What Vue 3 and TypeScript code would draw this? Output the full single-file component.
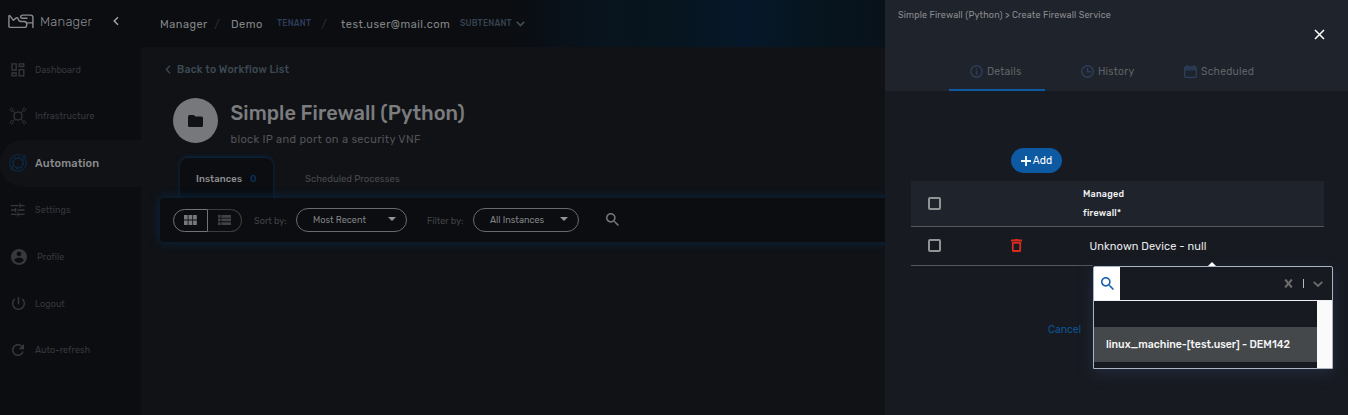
<script setup lang="ts">
import { ref } from 'vue'

interface NavItem {
  label: string
  icon: string
  active?: boolean
}

const nav: NavItem[] = [
  { label: 'Dashboard', icon: 'dashboard' },
  { label: 'Infrastructure', icon: 'infra' },
  { label: 'Automation', icon: 'automation', active: true },
  { label: 'Settings', icon: 'settings' },
  { label: 'Profile', icon: 'profile' },
  { label: 'Logout', icon: 'logout' },
  { label: 'Auto-refresh', icon: 'refresh' },
]

const allChecked = ref(false)
const rowChecked = ref(false)
</script>

<template>
  <div class="app">
    <aside class="sidebar">
      <div class="brand">
        <svg class="logo" width="28" height="16" viewBox="0 0 28 16" fill="none" stroke="#8a8b8d" stroke-width="1.4" stroke-linejoin="round" stroke-linecap="round">
          <path d="M16.6 13.4H2Q.9 13.4 .9 12.3V2.4Q.9 .9 2 1.9L5.4 6.3L8.3 3.9Q9.6 3.2 10 4.6Q10.6 7.4 13 7.5H16.4Q18.8 7.7 18.8 10.4Q18.8 13.4 16.6 13.4" />
          <path d="M19 4.3H14.4Q12.6 4.3 12.6 2.9Q12.8 1.1 15 1.1H22.6Q24.9 1.1 24.9 3.6V13.4M19.6 8.9H24.7" />
        </svg>
        <span class="brand-name">Manager</span>
        <svg class="collapse" width="8" height="10" viewBox="0 0 8 10" fill="none" stroke="#a0a1a3" stroke-width="1.5"><path d="M6 1.2L2.2 5L6 8.8" /></svg>
      </div>
      <nav>
        <div v-for="item in nav" :key="item.label" class="nav-item" :class="[item.icon, { active: item.active }]">
          <span class="nav-icon">
            <svg v-if="item.icon === 'dashboard'" width="14" height="14" viewBox="0 0 14 14" fill="none" stroke="currentColor" stroke-width="1.3">
              <path d="M1 .9H5.2V7H1zM8.2 .9H12.8V3.5H8.2zM8.2 6.6H12.8V12.8H8.2zM1 10H5.2V12.8H1z" />
            </svg>
            <svg v-else-if="item.icon === 'infra'" width="18" height="18" viewBox="0 0 18 18" fill="none" stroke="currentColor" stroke-width=".9">
              <circle cx="9" cy="9" r="4" /><circle cx="9" cy="9" r="4.8" stroke-dasharray="1.3 1.7" />
              <path d="M3.6 3.6L6 6M14.4 3.6L12 6M3.6 14.4L6 12M14.4 14.4L12 12" />
              <path d="M2.7 .8L4.6 2.7L2.7 4.6L.8 2.7zM15.3 .8L17.2 2.7L15.3 4.6L13.4 2.7zM2.7 13.4L4.6 15.3L2.7 17.2L.8 15.3zM15.3 13.4L17.2 15.3L15.3 17.2L13.4 15.3z" />
            </svg>
            <svg v-else-if="item.icon === 'automation'" width="18" height="18" viewBox="0 0 18 18" fill="none" stroke="currentColor" stroke-width=".9">
              <path d="M12.5 1.4A8.2 8.2 0 0 0 2 13M3.4 15A8.2 8.2 0 0 0 16.2 5" />
              <circle cx="9" cy="9" r="4.9" /><circle cx="9" cy="9" r="5.8" stroke-dasharray="1.9 2.6" />
              <circle cx="14.9" cy="3.1" r="1.5" /><circle cx="3.1" cy="14.6" r="1.3" />
            </svg>
            <svg v-else-if="item.icon === 'settings'" width="14" height="14" viewBox="0 0 14 14" fill="none" stroke="currentColor" stroke-width="1.3">
              <path d="M0 2.6H7.6M9 .6V4.6M9 2.6H13.6M0 7H4M4.6 5V9M6.6 7H13.6M0 11.4H5.6M7 9.4V13.4M7 11.4H13.6" />
            </svg>
            <svg v-else-if="item.icon === 'profile'" width="20" height="20" viewBox="2 2 20 20" fill="currentColor">
              <path d="M12 2C6.48 2 2 6.48 2 12s4.48 10 10 10 10-4.48 10-10S17.52 2 12 2zm0 3c1.66 0 3 1.34 3 3s-1.34 3-3 3-3-1.34-3-3 1.34-3 3-3zm0 14.2c-2.5 0-4.71-1.28-6-3.22.03-1.99 4-3.08 6-3.08 1.99 0 5.97 1.09 6 3.08-1.29 1.94-3.5 3.22-6 3.22z" />
            </svg>
            <svg v-else-if="item.icon === 'logout'" width="13" height="13" viewBox="3 3 18 18" fill="currentColor">
              <path d="M13 3h-2v10h2V3zm4.83 2.17l-1.42 1.42C17.99 7.86 19 9.81 19 12c0 3.87-3.13 7-7 7s-7-3.13-7-7c0-2.19 1.01-4.14 2.58-5.42L6.17 5.17C4.23 6.82 3 9.26 3 12c0 4.97 4.03 9 9 9s9-4.03 9-9c0-2.74-1.23-5.18-3.17-6.83z" />
            </svg>
            <svg v-else width="12" height="12" viewBox="4 4 16 16" fill="currentColor">
              <path d="M17.65 6.35C16.2 4.9 14.21 4 12 4c-4.42 0-7.99 3.58-7.99 8s3.57 8 7.99 8c3.73 0 6.84-2.55 7.73-6h-2.08c-.82 2.33-3.04 4-5.65 4-3.31 0-6-2.69-6-6s2.69-6 6-6c1.66 0 3.14.69 4.22 1.78L13 11h7V4l-2.35 2.35z" />
            </svg>
          </span>
          <span class="nav-label">{{ item.label }}</span>
        </div>
      </nav>
    </aside>

    <div class="main">
      <header class="topbar">
        <span class="crumb c1">Manager</span><span class="slash">/</span>
        <span class="crumb c2">Demo</span><span class="tag t1">TENANT</span><span class="slash s2">/</span>
        <span class="crumb c3">test.user@mail.com</span><span class="tag t2">SUBTENANT</span>
        <svg class="sub-arrow" width="9" height="6" viewBox="0 0 9 6" fill="none" stroke="#3d4f59" stroke-width="1.6"><path d="M.7 .8L4.5 4.6L8.3 .8" /></svg>
      </header>
      <section class="content">
        <a class="back">
          <svg width="6" height="9" viewBox="0 0 6 9" fill="none" stroke="currentColor" stroke-width="1.3"><path d="M5 .8L1.3 4.5L5 8.2" /></svg>
          <span>Back to Workflow List</span>
        </a>
        <div class="workflow">
          <div class="folder">
            <svg width="15" height="12" viewBox="0 0 15 12" fill="#101216"><path d="M1.5 0H5.8L7.3 1.5H13.5Q15 1.5 15 3V10.5Q15 12 13.5 12H1.5Q0 12 0 10.5V1.5Q0 0 1.5 0z" /></svg>
          </div>
          <div class="titles">
            <h1>Simple Firewall (Python)</h1>
            <p>block IP and port on a security VNF</p>
          </div>
        </div>
        <div class="tabs">
          <div class="tab current"><span>Instances</span><b>0</b></div>
          <div class="tab other">Scheduled Processes</div>
        </div>
        <div class="filters">
          <div class="toggle">
            <span class="half on"><svg width="13" height="10" viewBox="0 0 13 10" fill="#77787a"><path d="M0 0h3.7v4.6H0zM4.5 0h3.8v4.6H4.5zM9.1 0h3.7v4.6H9.1zM0 5.4h3.7V10H0zM4.5 5.4h3.8V10H4.5zM9.1 5.4h3.7V10H9.1z" /></svg></span>
            <span class="half"><svg width="13" height="10" viewBox="0 0 13 10" fill="#414244"><path d="M0 0h2.6v2.7H0zM3.3 0H13v2.7H3.3zM0 3.6h2.6v2.7H0zM3.3 3.6H13v2.7H3.3zM0 7.2h2.6V10H0zM3.3 7.2H13V10H3.3z" /></svg></span>
          </div>
          <span class="filter-label sort">Sort by:</span>
          <div class="select recent"><span>Most Recent</span><i></i></div>
          <span class="filter-label by">Filter by:</span>
          <div class="select all"><span>All Instances</span><i></i></div>
          <svg class="search" width="13" height="13" viewBox="3 3 17.5 17.5" fill="#77787a"><path d="M15.5 14h-.79l-.28-.27C15.41 12.59 16 11.11 16 9.5 16 5.91 13.09 3 9.5 3S3 5.91 3 9.5 5.91 16 9.5 16c1.61 0 3.09-.59 4.23-1.57l.27.28v.79l5 4.99L20.49 19l-4.99-5zm-6 0C7.01 14 5 11.99 5 9.5S7.01 5 9.5 5 14 7.01 14 9.5 11.99 14 9.5 14z" /></svg>
        </div>
      </section>
    </div>

    <aside class="drawer">
      <div class="drawer-head">
        <div class="path">Simple Firewall (Python) &gt; Create Firewall Service</div>
        <button class="close"><svg width="11" height="11" viewBox="0 0 11 11" stroke="#fff" stroke-width="1.5"><path d="M1 1L10 10M10 1L1 10" /></svg></button>
        <div class="drawer-tabs">
          <div class="dtab selected">
            <svg width="13" height="13" viewBox="0 0 13 13" fill="none" stroke="#2d3f5c" stroke-width="1.4"><circle cx="6.5" cy="6.5" r="5.7" /><path d="M6.5 5.6V9.8M6.5 3.2V4.6" /></svg>
            <span>Details</span>
          </div>
          <div class="dtab history">
            <svg width="13" height="13" viewBox="0 0 13 13" fill="none" stroke="#2d3f5c" stroke-width="1.4"><circle cx="6.5" cy="6.5" r="5.7" /><path d="M6.5 2.8V6.8H9.8" /></svg>
            <span>History</span>
          </div>
          <div class="dtab scheduled">
            <svg width="13" height="13" viewBox="0 0 13 13" fill="none" stroke="#2d3f5c" stroke-width="1.3"><rect x=".7" y="1.8" width="11.6" height="10.5" rx="1.2" /><path d="M.7 4.8H12.3M3 0V2M10 0V2M.7 3H12.3" /></svg>
            <span>Scheduled</span>
          </div>
        </div>
      </div>
      <div class="drawer-body">
        <button class="add"><svg width="10" height="10" viewBox="0 0 10 10" stroke="#fff" stroke-width="1.8"><path d="M5 0V10M0 5H10" /></svg><span>Add</span></button>
        <div class="table">
          <div class="tr head">
            <span class="box" :class="{ checked: allChecked }" @click="allChecked = !allChecked"></span>
            <div class="th">Managed<br />firewall*</div>
          </div>
          <div class="tr row">
            <span class="box" :class="{ checked: rowChecked }" @click="rowChecked = !rowChecked"></span>
            <svg class="trash" width="11" height="13" viewBox="0 0 11 13" fill="none" stroke="#d92b1c" stroke-width="1.8"><path d="M0 1.5H11M3.4 .9H7.6M1.8 3.8H9.2V11.4Q9.2 12 8.6 12H2.4Q1.8 12 1.8 11.4z" /></svg>
            <div class="device">
              Unknown Device - null
              <div class="popover">
                <i class="caret"></i>
                <div class="combo">
                  <span class="combo-icon"><svg width="13" height="13" viewBox="3 3 17.5 17.5" fill="#0f5ca8"><path d="M15.5 14h-.79l-.28-.27C15.41 12.59 16 11.11 16 9.5 16 5.91 13.09 3 9.5 3S3 5.91 3 9.5 5.91 16 9.5 16c1.61 0 3.09-.59 4.23-1.57l.27.28v.79l5 4.99L20.49 19l-4.99-5zm-6 0C7.01 14 5 11.99 5 9.5S7.01 5 9.5 5 14 7.01 14 9.5 11.99 14 9.5 14z" /></svg></span>
                  <svg class="clear" width="9" height="9" viewBox="0 0 9 9" stroke="#6c6d6c" stroke-width="2"><path d="M1.2 .5L7.8 8.5M7.8 .5L1.2 8.5" /></svg>
                  <i class="bar"></i>
                  <svg class="down" width="10" height="6" viewBox="0 0 10 6" fill="none" stroke="#6c6d6c" stroke-width="1.8"><path d="M.7 .8L5 5L9.3 .8" /></svg>
                </div>
                <div class="list">
                  <div class="options"><div class="option">linux_machine-[test.user] - DEM142</div></div>
                  <div class="track"></div>
                </div>
              </div>
            </div>
          </div>
        </div>
        <a class="cancel">Cancel</a>
      </div>
    </aside>
  </div>
</template>

<style>
html, body { margin: 0; background: #101216; overflow: hidden; }
</style>

<style scoped>
* { box-sizing: border-box; }
.app { display: flex; width: 1348px; height: 415px; overflow: hidden; background: #101216; font-family: Rubik, Roboto, "Liberation Sans", sans-serif; white-space: nowrap; }
svg { display: block; flex: none; }
button { border: 0; padding: 0; background: none; font: inherit; }

.sidebar { width: 141px; flex: none; background: #0b0d11; }
.brand { display: flex; align-items: center; height: 46.2px; padding: 0 0 4px 8px; }
.logo { margin-top: 1px; }
.brand-name { width: 54px; margin-left: 4px; font-size: 13px; font-weight: 300; letter-spacing: .2px; color: #8a8b8d; }
.collapse { margin-left: 18px; }
.nav-item { display: flex; align-items: center; height: 46.8px; padding-left: 8.5px; font-size: 9px; letter-spacing: .05px; color: #36383d; }
.nav-icon { display: flex; justify-content: center; width: 19px; margin-right: 7.5px; }
.profile .nav-icon { width: 21px; }
.profile .nav-icon svg { width: 16px; height: 16px; }
.nav-label { line-height: 12px; }
.active { background: #101216; border-radius: 23px 0 0 23px; font-size: 11px; font-weight: 500; letter-spacing: .15px; color: #8a8b8d; }
.active .nav-label { padding-top: 1px; }
.active .nav-icon { color: #0b3157; }

.main { width: 744px; flex: none; }
.topbar { display: flex; align-items: center; height: 47px; padding: 1px 0 0 19px; background: linear-gradient(90deg, #0b0d11 0, #0b0d11 370px, #08131d 450px, #06151f 540px, #051729 608px, #06151f 665px, #08121b 744px); }
.crumb { font-size: 11px; letter-spacing: .47px; color: #848587; }
.slash { width: 5px; font-size: 12px; color: #2a2c30; }
.c1 { width: 54px; }
.c2 { width: 46px; margin-left: 12px; }
.t1 { width: 44px; }
.s2 { margin-right: 15px; }
.c3 { width: 119px; }
.tag { font-size: 8.4px; font-weight: 500; letter-spacing: .2px; padding-bottom: 2px; color: #2c3c59; }
.t2 { width: 56px; color: #36424f; }
.content { padding-top: 15px; }
.back { display: flex; align-items: center; height: 14px; margin-left: 24px; color: #3d4952; font-size: 10.5px; font-weight: 500; letter-spacing: .22px; }
.back svg { margin-top: 1px; }
.back span { margin-left: 6px; }
.workflow { display: flex; margin: 22px 0 0 32px; height: 46px; }
.folder { display: flex; align-items: center; justify-content: center; width: 45px; height: 45px; border-radius: 50%; background: #77787b; }
.titles { margin: 2px 0 0 12.5px; }
h1 { margin: 0; font-size: 20px; line-height: 27px; font-weight: 500; letter-spacing: .03px; color: #7b7c7e; }
p { margin: 6px 0 0; font-size: 11px; line-height: 14px; letter-spacing: .35px; color: #525356; }
.tabs { display: flex; height: 40px; margin: 14px 0 0 39px; }
.tab { display: flex; align-items: center; font-size: 9.5px; }
.current { width: 93px; padding: 1px 0 0 16px; border-radius: 8px 8px 0 0; background: #0b0d11; box-shadow: 0 -1px 4px #0a2d4d; color: #8d8e90; font-weight: 500; letter-spacing: .1px; }
.current b { margin-left: 8px; color: #0a315a; font-weight: 500; font-size: 10px; }
.other { margin-left: 32px; padding-top: 1px; color: #484a4d; }
.filters { position: relative; display: flex; align-items: center; width: 760px; height: 44px; margin-left: 19px; padding-left: 13px; border-radius: 4px; background: #0b0d11; box-shadow: 0 0 10px 1px #0a2640; font-size: 9.1px; }
.toggle { display: flex; width: 69px; height: 23px; }
.half { display: flex; align-items: center; justify-content: center; width: 34px; border: 1px solid #3b3c3e; border-left: 0; border-radius: 0 12px 12px 0; }
.half.on { width: 35px; border: 1px solid #727375; border-radius: 12px 0 0 12px; }
.filter-label { color: #424346; }
.sort { width: 42px; margin-left: 12px; }
.select { display: flex; align-items: center; justify-content: space-between; height: 24px; border: 1px solid #68696c; border-radius: 12px; padding: 0 10px 0 16px; color: #828385; }
.select span { line-height: 12px; padding-bottom: 1px; }
.select i { margin-top: -3px; border: 4px solid transparent; border-top-color: #939496; border-bottom: 0; }
.recent { width: 111px; }
.by { width: 46px; margin-left: 20px; }
.all { width: 106px; }
.search { margin: -1px 0 0 27px; }

.drawer { position: relative; z-index: 1; width: 463px; flex: none; height: 415px; background: #171a21; }
.drawer-head { display: flex; flex-direction: column; height: 91px; background: #1f232b; }
.path { height: 15px; padding: 9px 0 0 13px; font-size: 9px; line-height: 12px; letter-spacing: .15px; color: #8b8d91; }
.close { align-self: flex-end; margin: 14px 23px 0 0; }
.drawer-tabs { display: flex; height: 39px; margin: auto 0 0 64px; }
.dtab { display: flex; align-items: center; gap: 4px; padding-left: 21px; font-size: 10.4px; letter-spacing: .2px; color: #5f6267; }
.selected { width: 96px; border-bottom: 2px solid #0d59a2; padding-top: 2px; }
.history { width: 118px; padding-left: 36px; }
.drawer-body { padding-top: 57px; }
.add { display: flex; align-items: center; justify-content: center; gap: 2px; width: 51px; height: 25px; margin-left: 126px; border-radius: 13px; background: #0d59a2; color: #fff; font-size: 10.4px; }
.table { width: 413px; margin: 8px 0 0 26px; }
.tr { display: flex; align-items: center; }
.head { height: 46px; padding-left: 17px; background: #1f232b; border-bottom: 1px solid #55575a; }
.row { height: 39px; padding: 0 0 2px 17px; background: linear-gradient(#55575a, #55575a) 0 100% / 182px 1px no-repeat; }
.box { width: 13px; height: 13px; border: 2px solid #929395; border-radius: 2px; flex: none; }
.box.checked { background: #0d59a2; }
.th { margin-left: 142px; font-size: 9px; line-height: 19px; font-weight: 500; letter-spacing: .25px; color: #f1f2f3; }
.trash { margin-left: 70px; }
.device { position: relative; margin: 2px 0 0 67.5px; font-size: 11px; line-height: 14px; letter-spacing: .1px; color: #e6e7e9; }
.popover { position: absolute; z-index: 2; left: 3.5px; top: 26.5px; width: 240px; height: 103px; border: 1px solid #a9b4c4; border-radius: 2px 2px 0 0; background: #171a21; box-shadow: 0 4px 14px #252b3d; }
.caret { position: absolute; top: -5px; left: 114px; border: 4px solid transparent; border-bottom-color: #fff; border-top: 0; }
.combo { display: flex; align-items: center; height: 34px; border-bottom: 1px solid #eef0f2; }
.combo-icon { display: flex; align-items: center; justify-content: center; width: 26px; height: 33px; background: #fff; }
.clear { margin-left: 163.5px; }
.bar { width: 1px; height: 9px; margin: 0 9px 0 10px; background: #b8b9ba; }
.list { display: flex; height: 67px; }
.options { flex: 1; padding-top: 26px; }
.option { height: 35px; padding-left: 12px; background: #45484b; color: #f4f5f5; font-size: 10.5px; line-height: 35px; font-weight: 500; letter-spacing: 0; }
.track { width: 15px; background: #fafafa; }
.cancel { display: block; width: 40px; margin: 57px 0 0 163px; font-size: 10.4px; line-height: 14px; color: #0d5394; }
</style>
